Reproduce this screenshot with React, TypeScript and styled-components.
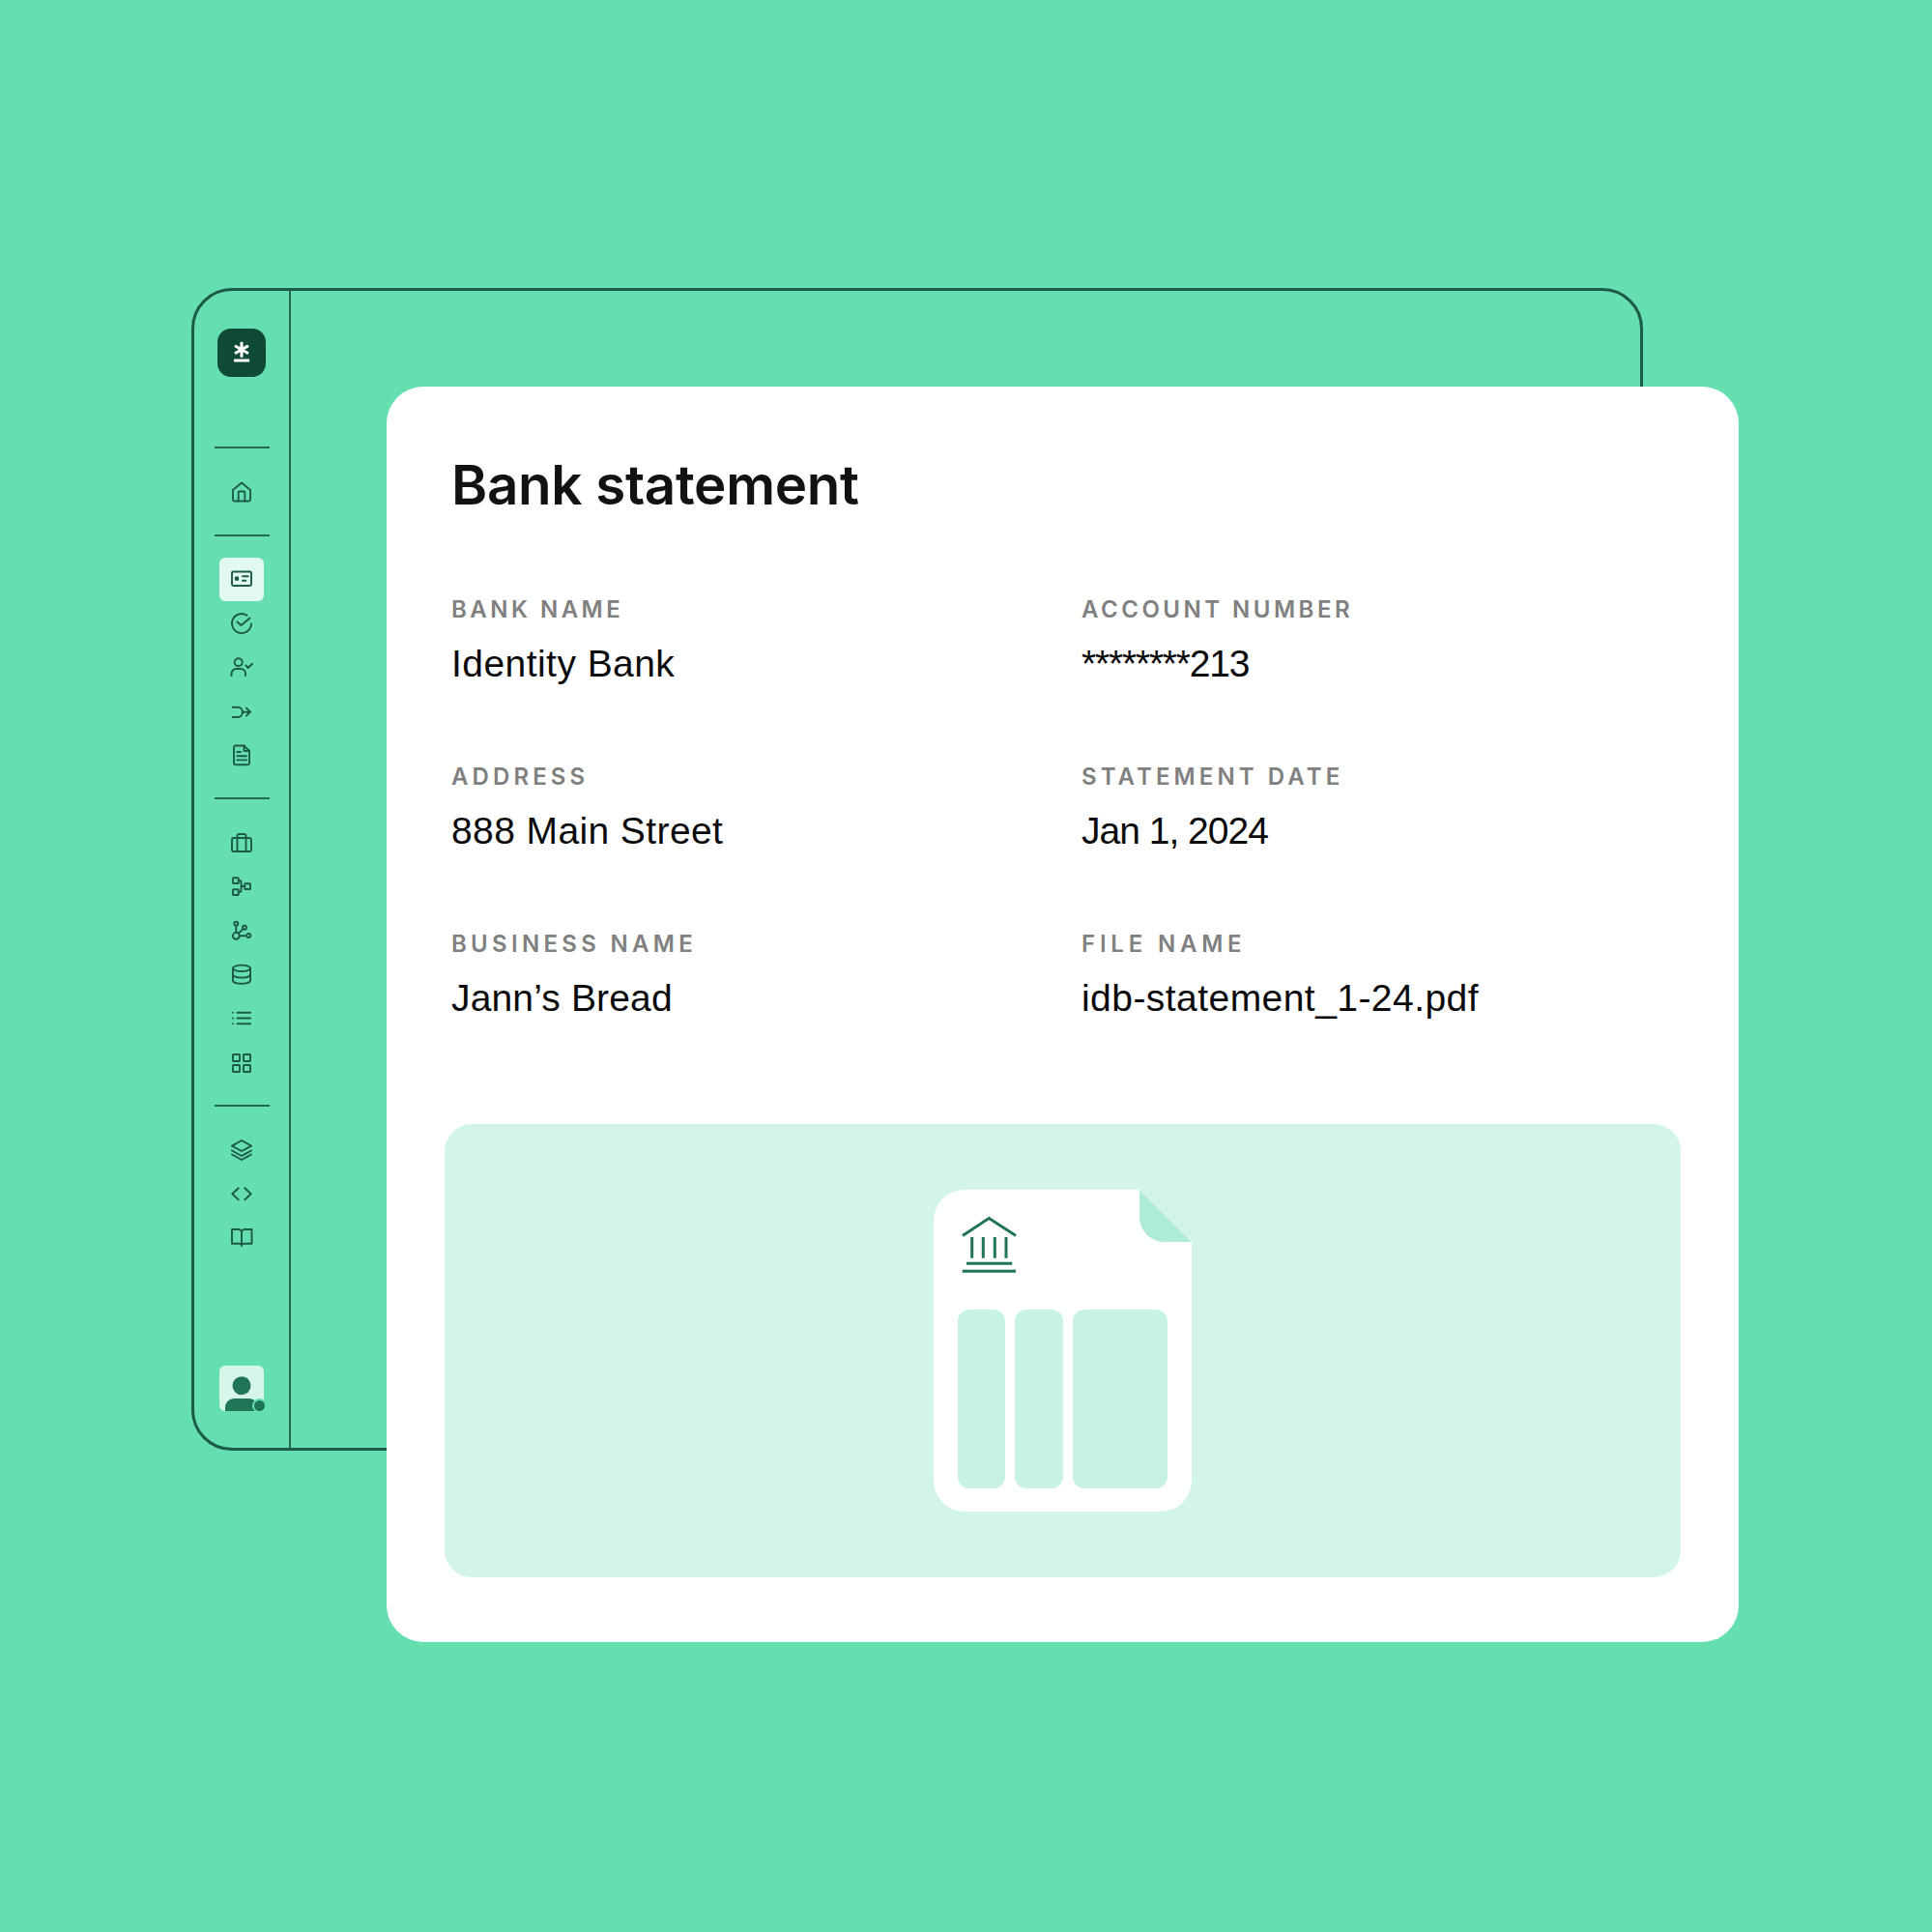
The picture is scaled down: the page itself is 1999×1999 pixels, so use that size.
import React from "react";
import styled, { createGlobalStyle } from "styled-components";

const GlobalStyle = createGlobalStyle`
  html, body {
    margin: 0;
    padding: 0;
    background: #66dfb0;
  }
  * {
    box-sizing: border-box;
  }
`;

const Stage = styled.div`
  position: relative;
  width: 1999px;
  height: 1999px;
  padding: 298px 299px 0 198px;
  background: #66dfb0;
  font-family: "Liberation Sans", Arial, sans-serif;
`;

const Frame = styled.div`
  display: flex;
  width: 1502px;
  height: 1203px;
  border: 3px solid #1b5a46;
  border-radius: 42px;
`;

const Sidebar = styled.nav`
  display: flex;
  flex-direction: column;
  align-items: center;
  width: 100px;
  height: 100%;
  padding: 39px 0 38px;
  border-right: 2px solid #246a52;
`;

const LogoMark = styled.div`
  display: flex;
  align-items: center;
  justify-content: center;
  width: 50px;
  height: 50px;
  flex: none;
  border-radius: 14px;
  background: #0f4a36;
`;

const Divider = styled.div<{ $top?: number }>`
  width: 57px;
  height: 2px;
  flex: none;
  margin: ${({ $top }) => $top ?? 21}px 0 22px;
  background: #246a52;
`;

const NavItem = styled.div<{ $active?: boolean }>`
  display: flex;
  align-items: center;
  justify-content: center;
  width: 46px;
  height: 45.5px;
  flex: none;
  border-radius: 6px;
  background: ${({ $active }) => ($active ? "#e1f9f0" : "transparent")};
`;

const Avatar = styled.div`
  position: relative;
  width: 46px;
  height: 47px;
  flex: none;
  margin-top: auto;
  border-radius: 6px;
  background: #d6f6ea;
`;

const AvatarArt = styled.svg`
  display: block;
  border-radius: 6px;
`;

const StatusDot = styled.span`
  position: absolute;
  right: -3px;
  bottom: -2px;
  width: 15px;
  height: 15px;
  border: 2px solid #66dfb0;
  border-radius: 50%;
  background: #1f7556;
`;

const IconSvg = styled.svg`
  display: block;
  width: 24px;
  height: 24px;
  fill: none;
  stroke: #1c5a46;
  stroke-width: 1.9;
  stroke-linecap: round;
  stroke-linejoin: round;
`;

const Card = styled.section`
  position: absolute;
  top: 400px;
  left: 400px;
  width: 1399px;
  height: 1299px;
  padding: 68px 60px 67px;
  border-radius: 38px;
  background: #ffffff;
`;

const Title = styled.h1`
  margin: 0 0 0 7px;
  color: #111214;
  font-family: Inter, "Liberation Sans", sans-serif;
  font-size: 56.5px;
  line-height: 68px;
  font-weight: 600;
  letter-spacing: -0.3px;
`;

const Details = styled.div`
  display: grid;
  grid-template-columns: 652px 1fr;
  row-gap: 79px;
  margin: 80px 0 0 7px;
`;

const Field = styled.div`
  display: flex;
  flex-direction: column;
  gap: 18px;
`;

const Label = styled.div<{ $tracking: number }>`
  color: #808080;
  font-family: Inter, "Liberation Sans", sans-serif;
  font-size: 24px;
  line-height: 30px;
  font-weight: 600;
  letter-spacing: ${({ $tracking }) => $tracking}px;
`;

const Value = styled.div<{ $tracking: number }>`
  color: #0a0a0a;
  font-size: 39px;
  line-height: 46px;
  letter-spacing: ${({ $tracking }) => $tracking}px;
`;

const Preview = styled.div`
  display: flex;
  justify-content: center;
  height: 469px;
  margin-top: 107px;
  padding: 68px 0;
  border-radius: 28px;
  background: #d3f5e9;
`;

const Sheet = styled.div`
  position: relative;
  display: flex;
  flex-direction: column;
  width: 267px;
  padding: 27px 25px 24px;
  border-radius: 32px;
  background: #ffffff;
`;

const SheetCorner = styled.svg`
  position: absolute;
  top: 0;
  right: 0;
`;

const BankSvg = styled.svg`
  display: block;
  flex: none;
  margin: 0 0 37px 4px;
`;

const Columns = styled.div`
  display: grid;
  flex: 1;
  grid-template-columns: 1fr 1fr 2fr;
  gap: 10px;
`;

const Column = styled.div`
  border-radius: 12px;
  background: #c7f3e2;
`;

const Home = () => (
  <IconSvg viewBox="0 0 24 24">
    <path d="M3 10 12 2.5 21 10v10a1.5 1.5 0 0 1-1.5 1.5h-15A1.5 1.5 0 0 1 3 20z" />
    <path d="M8.7 21.5V12.5a1 1 0 0 1 1-1h4.6a1 1 0 0 1 1 1v9" />
  </IconSvg>
);

const IdCard = () => (
  <IconSvg viewBox="0 0 24 24">
    <rect x="2" y="4.5" width="20" height="14.5" rx="1.5" />
    <circle cx="7" cy="11.7" r="1.4" fill="#1c5a46" />
    <path d="M13 9.2h5.7M13 13.8h3.3" />
  </IconSvg>
);

const CheckCircle = () => (
  <IconSvg viewBox="0 0 24 24">
    <path d="M22 12.5A10 10 0 1 1 17.5 3.7" />
    <path d="M7.5 10.5 11.5 14 20.5 6.5" />
  </IconSvg>
);

const UserCheck = () => (
  <IconSvg viewBox="0 0 24 24">
    <circle cx="8.7" cy="7.3" r="4" />
    <path d="M1.5 21v-2a5 5 0 0 1 5-5h4.5a5 5 0 0 1 5 5v2" />
    <path d="M16.4 10.5 18.7 13l4.4-4.2" />
  </IconSvg>
);

const MergeArrow = () => (
  <IconSvg viewBox="0 0 24 24">
    <path d="M2.7 7.7H8a5 5 0 0 1 5 5 5.3 5.3 0 0 1-5 5.3H2.7" />
    <path d="M13 12.7h7.7M17 8.7l4 4-4 4" />
  </IconSvg>
);

const FileDoc = () => (
  <IconSvg viewBox="0 0 24 24">
    <path d="M5.5 2.5h9L20 8v12.7a1.5 1.5 0 0 1-1.5 1.5h-13A1.5 1.5 0 0 1 4 20.7V4a1.5 1.5 0 0 1 1.5-1.5z" />
    <path d="M14.5 2.5V8H20M7.3 9h3.6M7.3 13.2H17M7.3 17.4H17" />
  </IconSvg>
);

const Briefcase = () => (
  <IconSvg viewBox="0 0 24 24">
    <rect x="2" y="7" width="20" height="14" rx="2" />
    <path d="M7.5 21V5a2 2 0 0 1 2-2h5a2 2 0 0 1 2 2v16" />
  </IconSvg>
);

const FlowChart = () => (
  <IconSvg viewBox="0 0 24 24">
    <rect x="3" y="3.3" width="5.7" height="5.7" rx="0.6" />
    <rect x="3" y="15.3" width="5.7" height="5.7" rx="0.6" />
    <rect x="15.3" y="9.3" width="5.7" height="5.7" rx="0.6" />
    <path d="M8.7 6h.8a2 2 0 0 1 2 2v8a2 2 0 0 1-2 2h-.8M11.5 12h3.8" />
  </IconSvg>
);

const BranchNodes = () => (
  <IconSvg viewBox="0 0 24 24">
    <circle cx="6.3" cy="17.3" r="3.4" />
    <circle cx="6.3" cy="4.7" r="2" />
    <circle cx="15" cy="8.7" r="2" />
    <circle cx="19.3" cy="17" r="2" />
    <path d="M6.3 6.7v7.2M8.7 14.8l4.9-4.7M9.7 17.2h7.6" />
  </IconSvg>
);

const Database = () => (
  <IconSvg viewBox="0 0 24 24">
    <ellipse cx="12" cy="5.8" rx="9" ry="3.2" />
    <path d="M3 5.8v12.7c0 1.8 4 3.2 9 3.2s9-1.4 9-3.2V5.8" />
    <path d="M3 12.3c0 1.8 4 3.2 9 3.2s9-1.4 9-3.2" />
  </IconSvg>
);

const ListLines = () => (
  <IconSvg viewBox="0 0 24 24">
    <path d="M7.5 5.7H21M7.5 11.5H21M7.5 17.3H21" />
    <path d="M3 5.7h.01M3 11.5h.01M3 17.3h.01" />
  </IconSvg>
);

const GridSquares = () => (
  <IconSvg viewBox="0 0 24 24">
    <rect x="3" y="4" width="7" height="7" rx="0.6" />
    <rect x="14" y="4" width="7" height="7" rx="0.6" />
    <rect x="3" y="15" width="7" height="7" rx="0.6" />
    <rect x="14" y="15" width="7" height="7" rx="0.6" />
  </IconSvg>
);

const Layers = () => (
  <IconSvg viewBox="0 0 24 24">
    <path d="M12 2l10 5.7L12 13 2 7.7z" />
    <path d="M2 12.5 12 18l10-5.5M2 16.5 12 22l10-5.5" />
  </IconSvg>
);

const CodeBrackets = () => (
  <IconSvg viewBox="0 0 24 24">
    <path d="M8.7 6.3 2.3 12.3l6.4 6M15.3 6.3l6.4 6-6.4 6" />
  </IconSvg>
);

const BookOpen = () => (
  <IconSvg viewBox="0 0 24 24">
    <path d="M12 20V6a3.5 3 0 0 0-3.5-3H2v14.7h8L12 19l2-1.3h8.5V3H15.5A3.5 3 0 0 0 12 6" />
  </IconSvg>
);

const Logo = () => (
  <svg width="24" height="30" viewBox="0 0 24 30" fill="none" stroke="#ffffff" strokeWidth="3">
    <path d="M12 3.7v16M5 7.7l14 8M19 7.7l-14 8" />
    <path d="M4 23h16" />
  </svg>
);

const BankIcon = () => (
  <BankSvg width="57" height="60" viewBox="0 0 57 60" fill="none" stroke="#1f7556" strokeWidth="3">
    <path d="M1 20.5 28.3 2.5 56 20.5" />
    <path d="M10.7 22v21.7M22.3 22v21.7M34.3 22v21.7M46 22v21.7" />
    <path d="M5 49.3h47.3M.7 57.3H56" />
  </BankSvg>
);

const groups = [
  [<IdCard />, <CheckCircle />, <UserCheck />, <MergeArrow />, <FileDoc />],
  [<Briefcase />, <FlowChart />, <BranchNodes />, <Database />, <ListLines />, <GridSquares />],
  [<Layers />, <CodeBrackets />, <BookOpen />],
];

// label, value, label tracking, value tracking
const fields: [string, string, number, number][] = [
  ["BANK NAME", "Identity Bank", 3.5, 0.45],
  ["ACCOUNT NUMBER", "********213", 3.5, -1.2],
  ["ADDRESS", "888 Main Street", 4.1, 0.4],
  ["STATEMENT DATE", "Jan 1, 2024", 4.1, -1],
  ["BUSINESS NAME", "Jann’s Bread", 4.3, 0.15],
  ["FILE NAME", "idb-statement_1-24.pdf", 4.8, 0.45],
];

const App = () => {
  return (
    <Stage>
      <GlobalStyle />
      <Frame>
        <Sidebar>
          <LogoMark>
            <Logo />
          </LogoMark>
          <Divider $top={72} />
          <NavItem>
            <Home />
          </NavItem>
          {groups.map((items, g) => (
            <React.Fragment key={g}>
              <Divider />
              {items.map((icon, i) => (
                <NavItem key={i} $active={g === 0 && i === 0}>
                  {icon}
                </NavItem>
              ))}
            </React.Fragment>
          ))}
          <Avatar>
            <AvatarArt width="46" height="47" viewBox="0 0 46 47" fill="#1f7556">
              <circle cx="23" cy="20.7" r="9.5" />
              <path d="M6 47v-4a9 9 0 0 1 9-9h16a9 9 0 0 1 9 9v4z" />
            </AvatarArt>
            <StatusDot />
          </Avatar>
        </Sidebar>
      </Frame>
      <Card>
        <Title>Bank statement</Title>
        <Details>
          {fields.map(([label, value, labelTracking, valueTracking]) => (
            <Field key={label}>
              <Label $tracking={labelTracking}>{label}</Label>
              <Value $tracking={valueTracking}>{value}</Value>
            </Field>
          ))}
        </Details>
        <Preview>
          <Sheet>
            <SheetCorner width="54" height="54" viewBox="0 0 54 54">
              <path d="M0 0H54V54z" fill="#d3f5e9" />
              <path d="M0 0 54 54H26A26 26 0 0 1 0 28z" fill="#aeecd6" />
            </SheetCorner>
            <BankIcon />
            <Columns>
              <Column />
              <Column />
              <Column />
            </Columns>
          </Sheet>
        </Preview>
      </Card>
    </Stage>
  );
};

export default App;
